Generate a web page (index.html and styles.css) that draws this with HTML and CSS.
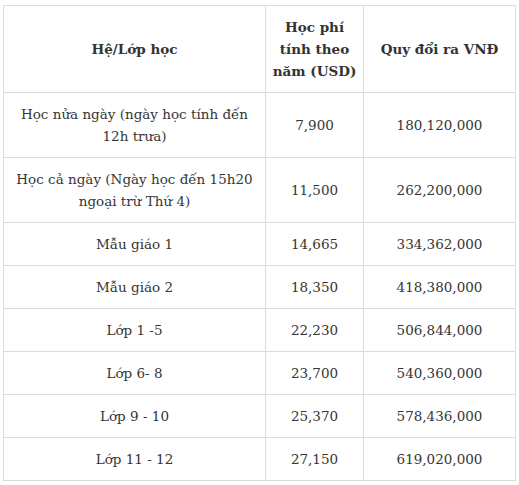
FILE: index.html
```html
<!DOCTYPE html>
<html lang="vi">
<head>
<meta charset="utf-8">
<link rel="stylesheet" href="styles.css">
</head>
<body>
<table class="fees">
  <colgroup>
    <col class="c1">
    <col class="c2">
    <col class="c3">
  </colgroup>
  <thead>
    <tr>
      <th>Hệ/Lớp học</th>
      <th class="narrow">Học phí<br>tính theo<br>năm (USD)</th>
      <th>Quy đổi ra VNĐ</th>
    </tr>
  </thead>
  <tbody>
    <tr><td>Học nửa ngày (ngày học tính đến 12h trưa)</td><td>7,900</td><td>180,120,000</td></tr>
    <tr><td>Học cả ngày (Ngày học đến 15h20 ngoại trừ Thứ 4)</td><td>11,500</td><td>262,200,000</td></tr>
    <tr><td>Mẫu giáo 1</td><td>14,665</td><td>334,362,000</td></tr>
    <tr><td>Mẫu giáo 2</td><td>18,350</td><td>418,380,000</td></tr>
    <tr><td>Lớp 1 -5</td><td>22,230</td><td>506,844,000</td></tr>
    <tr><td>Lớp 6- 8</td><td>23,700</td><td>540,360,000</td></tr>
    <tr><td>Lớp 9 - 10</td><td>25,370</td><td>578,436,000</td></tr>
    <tr><td>Lớp 11 - 12</td><td>27,150</td><td>619,020,000</td></tr>
  </tbody>
</table>
</body>
</html>
```
FILE: styles.css
```css
html, body {
  margin: 0;
  background: #fff;
}
body {
  padding: 5px 0 0 3px;
  font-family: "DejaVu Serif", "Liberation Serif", serif;
  font-size: 13.5px;
  color: #353535;
}
.fees {
  border-collapse: collapse;
  table-layout: fixed;
  width: 512px;
  border: 1px solid #dcdcdc;
}
.c1 { width: 262px; }
.c2 { width: 98px; }
.c3 { width: 152px; }
.fees th,
.fees td {
  border: 1px solid #dcdcdc;
  padding: 10px 8px;
  text-align: center;
  vertical-align: middle;
  line-height: 22px;
}
.fees th {
  font-weight: bold;
  font-size: 13.5px;
  color: #333;
}
.fees th.narrow {
  padding-left: 0;
  padding-right: 0;
  white-space: nowrap;
}
```
